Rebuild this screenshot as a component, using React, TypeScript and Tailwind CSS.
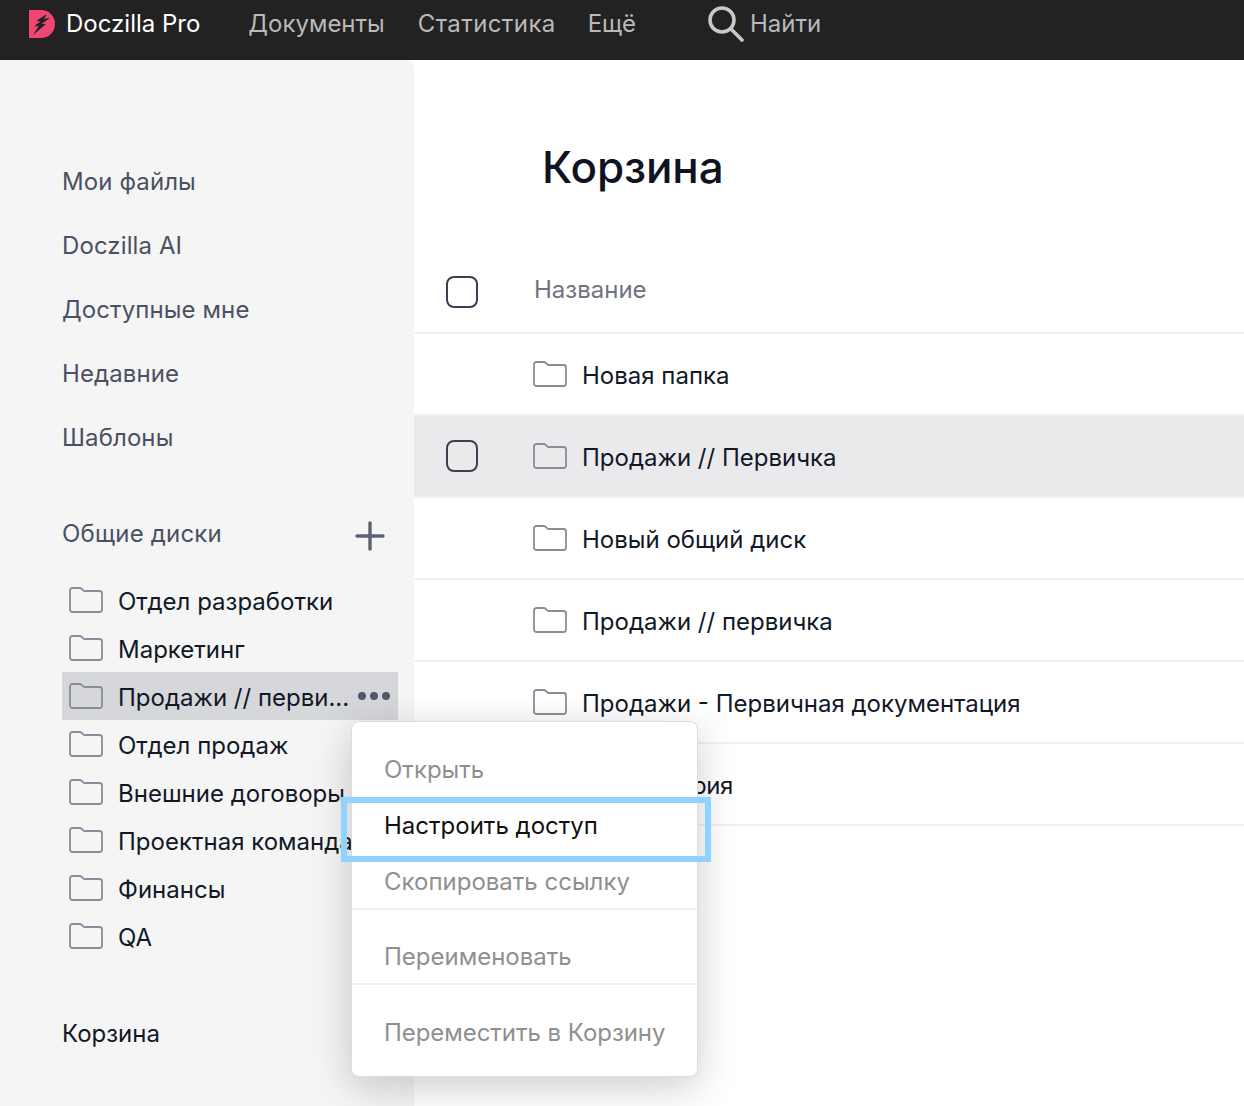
const navItems = ['Документы', 'Статистика', 'Ещё'];
const sideLinks = ['Мои файлы', 'Doczilla AI', 'Доступные мне', 'Недавние', 'Шаблоны'];
const drives = ['Отдел разработки', 'Маркетинг', 'Продажи // первичка', 'Отдел продаж', 'Внешние договоры', 'Проектная команда', 'Финансы', 'QA'];
const files = ['Новая папка', 'Продажи // Первичка', 'Новый общий диск', 'Продажи // первичка', 'Продажи - Первичная документация', 'Лаборатория'];

function FolderIcon() {
  return (
    <svg width="34" height="26" viewBox="0 0 34 26" fill="none" className="shrink-0">
      <path
        d="M1 3.5C1 2.1 2.1 1 3.5 1H10.5C11.5 1 12.2 1.4 13 2.2L14.2 3.4C14.7 3.9 15.3 4 16 4H30.5C31.9 4 33 5.1 33 6.5V22.5C33 23.9 31.9 25 30.5 25H3.5C2.1 25 1 23.9 1 22.5V3.5Z"
        stroke="#8a8d99"
        strokeWidth="1.8"
      />
    </svg>
  );
}

function Logo() {
  return (
    <svg width="26" height="28" viewBox="0 0 26 28" className="shrink-0">
      <path d="M0 0H12C20 0 26 6.2 26 14C26 21.8 20 28 12 28H0V0Z" fill="#ef476f" />
      <path d="M18 4L7 11L11.5 11.2L5 16.5L9.8 16L4 25L17 14L12.5 14L21 8L15 8.8L18 4Z" fill="#222222" />
    </svg>
  );
}

function SearchIcon() {
  return (
    <svg width="36" height="36" viewBox="0 0 36 36" fill="none" stroke="#c8c8c8" strokeWidth="3.6" strokeLinecap="round" className="shrink-0">
      <circle cx="14" cy="14" r="12" />
      <path d="M23 23L34 34" />
    </svg>
  );
}

function Checkbox() {
  return <div className="w-8 h-8 rounded-lg border-2 border-[#3a3f52]" />;
}

function ContextMenu() {
  const item = 'flex items-center px-8 text-[#8f8f8f] whitespace-nowrap';
  return (
    <div className="absolute left-[351px] top-[721px] w-[347px] h-[356px] bg-white rounded-lg border border-[#dcdcdc] shadow-[0_10px_40px_rgba(0,0,0,0.2)] z-10 pt-5">
      <div className={`${item} h-14`}>Открыть</div>
      <div className="flex items-center px-8 h-14 text-[#111111]">Настроить доступ</div>
      <div className={`${item} h-14`}>Скопировать ссылку</div>
      <div className="border-b-2 border-[#eeeeee] mt-[-2px]" />
      <div className={`${item} h-[73px] pt-[21px]`}>Переименовать</div>
      <div className="border-b-2 border-[#eeeeee]" />
      <div className={`${item} h-[74px] pt-[21px] tracking-[-0.05px]`}>Переместить в Корзину</div>
    </div>
  );
}

export default function App() {
  return (
    <div className="relative w-[1244px] h-[1106px] overflow-hidden bg-[#222222] font-['Inter',sans-serif] text-[24px]">
      {/* Top bar */}
      <header className="h-[60px] flex items-center pl-[29px] pb-[12px]">
        <Logo />
        <span className="ml-[11px] text-white">Doczilla Pro</span>
        <nav className="flex gap-[33px] ml-12 text-[#b9b9b9]">
          {navItems.map((n) => (
            <span key={n} className={n === 'Статистика' ? 'tracking-[0.4px] mr-[-1px]' : ''}>
              {n}
            </span>
          ))}
        </nav>
        <div className="flex items-center gap-[6px] ml-[72px] text-[#b9b9b9]">
          <SearchIcon />
          <span>Найти</span>
        </div>
      </header>

      <div className="flex h-[1046px] bg-white">
        {/* Sidebar */}
        <aside className="w-[414px] bg-[#f5f5f5] rounded-tr-lg shrink-0 pt-[90px] pl-[62px] pr-4">
          {sideLinks.map((l) => (
            <div key={l} className="h-16 flex items-center text-[#4c5063] tracking-[0.1px]">
              {l}
            </div>
          ))}
          <div className="flex items-center justify-between mt-[32px] h-16 pr-[13px] text-[#4c5063] tracking-[0.2px]">
            <span>Общие диски</span>
            <svg width="30" height="30" viewBox="0 0 30 30" fill="none" stroke="#5d6172" strokeWidth="3.4" strokeLinecap="round" className="mt-1">
              <path d="M15 2V28M2 15H28" />
            </svg>
          </div>
          <ul className="mt-[10px]">
            {drives.map((d, i) => (
              <li key={d} className={`h-12 flex items-center pl-[7px] pr-[8px] text-[#111827] ${i === 2 ? 'bg-[#d6d7db]' : ''}`}>
                <FolderIcon />
                <span className="ml-[15px] pt-1 truncate">{i === 2 ? 'Продажи // перви...' : d}</span>
                {i === 2 && (
                  <span className="ml-auto flex gap-[4px]">
                    <span className="w-2 h-2 rounded-full bg-[#53576a]" />
                    <span className="w-2 h-2 rounded-full bg-[#53576a]" />
                    <span className="w-2 h-2 rounded-full bg-[#53576a]" />
                  </span>
                )}
              </li>
            ))}
          </ul>
          <div className="mt-[56px] text-[#111827]">Корзина</div>
        </aside>

        {/* Main */}
        <main className="flex-1 min-w-0">
          <h1 className="pl-[128px] pt-[77px] h-[180px] text-[44px] font-medium leading-[60px] text-[#0f1222] tracking-[-0.1px]">Корзина</h1>
          <div className="h-[94px] flex items-center pl-[32px] border-b-2 border-[#f2f2f2] pt-3">
            <Checkbox />
            <span className="ml-[56px] mb-1 text-[#70737f]">Название</span>
          </div>
          {files.map((f, i) => (
            <div
              key={f}
              className={`h-[82px] flex items-center border-b-2 border-[#f2f2f2] ${i === 1 ? 'bg-[#eaeaed]' : ''}`}
            >
              <div className="w-[119px] pl-[32px] shrink-0">{i === 1 && <Checkbox />}</div>
              <FolderIcon />
              <span className={`ml-[15px] pt-1 text-[#111827] ${i === 5 ? 'tracking-[-0.45px]' : ''}`}>{f}</span>
            </div>
          ))}
        </main>
      </div>

      <ContextMenu />
      {/* Annotation frame */}
      <div className="absolute left-[341px] top-[797px] w-[370px] h-[65px] border-[6px] border-[#8fd3ff] z-20" />
    </div>
  );
}
